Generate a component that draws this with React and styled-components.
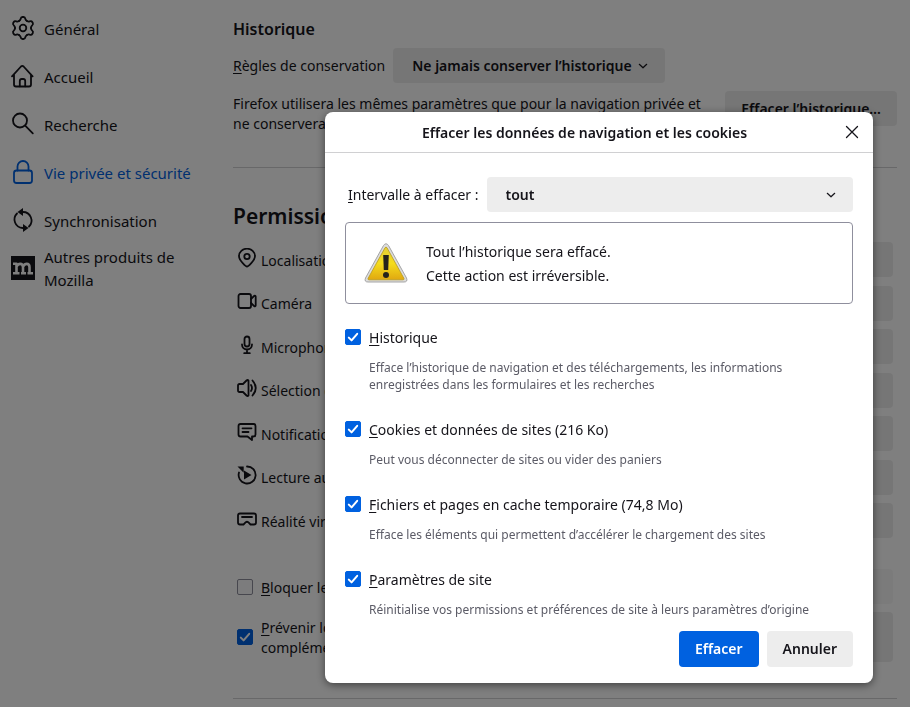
import React from "react";
import styled, { createGlobalStyle } from "styled-components";

const GlobalStyle = createGlobalStyle`
  * {
    box-sizing: border-box;
  }
  body {
    margin: 0;
    background: #fff;
    color: #15141a;
    font: 14px/20px "Noto Sans", "Open Sans", sans-serif;
  }
  u {
    text-underline-offset: 2px;
  }
`;

const chevron = `url("data:image/svg+xml,%3Csvg xmlns='http://www.w3.org/2000/svg' width='12' height='12' fill='none' stroke='%2315141a' stroke-width='1.2' stroke-linecap='round' stroke-linejoin='round'%3E%3Cpath d='M2.3 4.3 6 7.8l3.7-3.5'/%3E%3C/svg%3E")`;
const tick = `url("data:image/svg+xml,%3Csvg xmlns='http://www.w3.org/2000/svg' width='16' height='16' fill='none' stroke='white' stroke-width='2' stroke-linecap='round' stroke-linejoin='round'%3E%3Cpath d='M3.8 8.6l2.8 2.8 5.6-6.6'/%3E%3C/svg%3E")`;

const Page = styled.div`
  display: flex;
  height: 100vh;
  overflow: hidden;
`;

const Sidebar = styled.nav`
  flex: 0 0 233px;
  padding: 4px 30px 0 11px;
`;

const NavItem = styled.a`
  display: flex;
  align-items: center;
  gap: 9px;
  height: 48px;
  font-size: 15px;
  line-height: 23px;
  color: ${props => (props.$active ? "#0061e0" : "inherit")};
  text-decoration: none;

  svg {
    flex: none;
  }
  span {
    padding-top: 2px;
  }
`;

const Main = styled.main`
  flex: 1;
  min-width: 0;
  padding: 19px 13px 0 0;
`;

const SubTitle = styled.h2`
  margin: 0 0 9px;
  font-size: 16px;
  line-height: 20px;
  font-weight: 600;
`;

const Title = styled.h1`
  margin: 0 0 8px;
  font-size: 21px;
  line-height: 28px;
  font-weight: 600;
`;

const Field = styled.div`
  display: flex;
  align-items: center;
  gap: 8px;
`;

const Select = styled.select`
  appearance: none;
  flex: ${props => (props.$grow ? 1 : "none")};
  height: 35px;
  padding: 0 33px 0 19px;
  border: 0;
  border-radius: 4px;
  background: #ededed ${chevron} no-repeat right 16px center;
  color: inherit;
  font: inherit;
  font-weight: 600;
`;

const Button = styled.button`
  min-width: ${props => (props.$wide ? "175px" : "0")};
  min-height: ${props => (props.$tall ? "50px" : "35px")};
  padding: 0 16px;
  border: 0;
  border-radius: 4px;
  background: ${props => (props.$primary ? "#0061e0" : "#ededed")};
  color: ${props => (props.$primary ? "#fff" : "#15141a")};
  font: inherit;
  font-weight: 600;
  white-space: nowrap;

  &:disabled {
    opacity: 0.4;
  }
`;

const HistoryNote = styled.div`
  display: flex;
  justify-content: space-between;
  align-items: flex-start;
  gap: 16px;
  margin-top: 8px;

  p {
    flex: 1;
    max-width: 476px;
    margin: 3px 0 0;
  }
`;

const Divider = styled.hr`
  margin: ${props => props.$top}px 0 0;
  border: 0;
  border-top: 1px solid #d0d0d2;
`;

const Permissions = styled.section`
  margin-top: 34px;
`;

const Rows = styled.ul`
  margin: 0;
  padding: 0 4px;
  list-style: none;
`;

const Row = styled.li`
  display: flex;
  align-items: center;
  gap: 4px;
  height: 43px;

  &:nth-child(even) {
    height: 44px;
  }
  > svg {
    flex: none;
    margin-bottom: 4px;
  }
  span {
    flex: 1;
    padding-top: 2px;
  }
`;

const CheckRows = styled.div`
  padding: 0 4px;
  margin-top: 23px;
`;

const CheckRow = styled.div`
  display: flex;
  align-items: center;
  gap: 8px;
  height: ${props => (props.$tall ? "57px" : "43px")};

  label {
    flex: 1;
    padding-top: 2px;
  }
`;

const Checkbox = styled.input.attrs({ type: "checkbox" })`
  appearance: none;
  flex: none;
  width: 16px;
  height: 16px;
  margin: 0;
  border: 1px solid #8f8f9d;
  border-radius: 2px;
  background: #f9f9fb;

  &:checked {
    border-color: #0061e0;
    background: #0061e0 ${tick} center no-repeat;
  }
`;

const Overlay = styled.div`
  position: fixed;
  inset: 0;
  display: flex;
  justify-content: flex-end;
  align-items: flex-start;
  padding: 112px 37px 24px;
  background: rgba(0, 0, 0, 0.5);
`;

const Dialog = styled.div`
  width: 100%;
  max-width: 548px;
  border-radius: 8px;
  background: #fff;
  box-shadow: 0 2px 8px rgba(0, 0, 0, 0.5);
`;

const DialogHeader = styled.header`
  display: flex;
  align-items: center;
  height: 41px;
  padding-right: 13px;
  border-bottom: 1px solid #d0d0d2;

  h2 {
    flex: 1;
    margin: 0;
    padding-top: 2px;
    font-size: 14px;
    font-weight: 600;
    text-align: center;
  }
`;

const CloseButton = styled.button`
  display: flex;
  padding: 0;
  border: 0;
  background: none;
`;

const DialogBody = styled.form`
  padding: 24px 20px 16px;

  ${Field} {
    padding-left: 3px;
  }
`;

const Warning = styled.div`
  display: flex;
  align-items: center;
  gap: 18px;
  margin: 10px 0 22px;
  padding: 17px 18px 15px;
  border: 1px solid #8f8f9d;
  border-radius: 4px;
  line-height: 24px;

  p {
    margin: 0;
  }
`;

const Option = styled.div`
  display: grid;
  grid-template-columns: 16px 1fr;
  align-items: center;
  gap: 11px 8px;
  margin-bottom: 25px;

  &:last-of-type {
    margin-bottom: 13px;
  }
  label {
    padding-top: 2px;
  }
  p {
    grid-column: 2;
    max-width: 470px;
    margin: 0;
    color: #5b5b66;
    font-size: 12px;
    line-height: 17px;
  }
`;

const Actions = styled.footer`
  display: flex;
  justify-content: flex-end;
  gap: 8px;

  ${Button} {
    min-height: 36px;
  }
`;

const Icon = ({ size = 20, children }) => (
  <svg
    width={size}
    height={size}
    viewBox={`0 0 ${size} ${size}`}
    fill="none"
    stroke="currentColor"
    strokeWidth="1.8"
    strokeLinecap="round"
    strokeLinejoin="round"
    aria-hidden="true"
  >
    {children}
  </svg>
);

const nav = [
  {
    label: "Général",
    icon: (
      <>
        {[0, 60, 120, 180, 240, 300].map(angle => (
          <path
            key={angle}
            transform={`rotate(${angle} 12 12)`}
            d="M8 5.1C9 4.5 9.4 4 9.6 3Q10 1 11.4 1h1.200Q14 1 14.400 3C14.600 4 15 4.500 16 5.100"
          />
        ))}
        <circle cx="12" cy="12" r="3.3" />
      </>
    )
  },
  {
    label: "Accueil",
    icon: (
      <>
        <path d="M1 12.3 10 2.5q1.3-1.3 2.6 0l9 9.8M3 10.500v10q0 2 2 2h13q2 0 2-2v-10" />
        <path d="M8.8 22.3V17q0-2 2-2h1.400q2 0 2 2v5.300" />
      </>
    )
  },
  {
    label: "Recherche",
    icon: (
      <>
        <circle cx="9" cy="8.5" r="7" />
        <path d="m14.2 13.7 7.6 7.6" />
      </>
    )
  },
  {
    label: "Vie privée et sécurité",
    active: true,
    icon: (
      <>
        <rect x="3" y="10.5" width="18" height="12.5" rx="2.5" />
        <path d="M6.500 10.500v-4a5.500 5.500 0 0 1 11 0v4" />
      </>
    )
  },
  {
    label: "Synchronisation",
    icon: (
      <>
        <path d="M6 5.500A8.500 8.500 0 0 0 11.500 20M12 4a8.500 8.500 0 0 1 6 14.500" />
        <path
          d="M12 0v8L6.500 4zM12 16v8l5.500-4z"
          fill="currentColor"
          stroke="none"
        />
      </>
    )
  },
  {
    label: "Autres produits de Mozilla",
    icon: (
      <>
        <path d="M0 0h24v24H0z" fill="currentColor" stroke="none" />
        <path
          d="M2 7.8h3.500v9.700M2 17.200h6.500M5.500 10.500Q7 7.900 9.200 7.900q2.800 0 2.800 3.300v6M10 17.200h5M12 10.500q1.500-2.600 3.700-2.600 2.800 0 2.800 3.300v6M16.500 17.200H22"
          stroke="#fff"
          strokeWidth="2.6"
          strokeLinecap="butt"
        />
      </>
    )
  }
];

const permissions = [
  {
    label: "Localisation",
    icon: (
      <>
        <path d="M10 18.500c-.7 0-8-5.700-8-10.500a8 7.300 0 0 1 16 0c0 4.800-7.300 10.500-8 10.500z" />
        <circle cx="10" cy="8.5" r="2.7" />
      </>
    )
  },
  {
    label: "Caméra",
    icon: (
      <>
        <rect x="1.5" y="3" width="12.5" height="14" rx="2" />
        <path d="m14 8 3.200-3.200q1.300-.6 1.500.8v8.800q-.2 1.400-1.500.8L14 12" />
      </>
    )
  },
  {
    label: "Microphone",
    icon: (
      <>
        <rect x="7.5" y="1.5" width="5" height="10" rx="2.5" />
        <path d="M5 9.500a5 5 0 0 0 10 0M10 14.500v3.500M7.200 18.200h5.600" />
      </>
    )
  },
  {
    label: "Sélection du haut-parleur",
    icon: (
      <>
        <path d="M11.500 2.500v15q-.8 1-2 0L6 14H2.500Q1 14 1 12.500v-5Q1 6 2.500 6H6l3.500-3.500q1.200-1 2 0z" />
        <path d="M14 7q2 3 0 6M15.500 2.500q6.500 7.500 0 15" />
      </>
    )
  },
  {
    label: "Notifications",
    icon: (
      <>
        <path d="M3.500 2h13Q18.500 2 18.500 4v8.500q0 2-2 2H15V18l-4.500-3.500h-7q-2 0-2-2V4q0-2 2-2z" />
        <path d="M5.500 6.300h9M5.500 10h6" />
      </>
    )
  },
  {
    label: "Lecture automatique",
    icon: (
      <>
        <path d="M10 1.500a8.500 8.500 0 1 1-8 6" />
        <path
          d="M.5 1.500h6.200v6.200zM7 5.500v9l7.500-4.500z"
          fill="currentColor"
          stroke="none"
        />
      </>
    )
  },
  {
    label: "Réalité virtuelle",
    icon: (
      <>
        <path d="M3 4.500h14q2 0 2 2v7q0 2-2 2h-3.500l-2.300-2.300q-1.200-1-2.400 0L6.500 15.500H3q-2 0-2-2v-7q0-2 2-2z" />
        <path d="M5 8h10" />
      </>
    )
  }
];

const options = [
  {
    id: "history",
    label: "Historique",
    text:
      "Efface l’historique de navigation et des téléchargements, les informations enregistrées dans les formulaires et les recherches"
  },
  {
    id: "cookies",
    label: "Cookies et données de sites (216 Ko)",
    text: "Peut vous déconnecter de sites ou vider des paniers"
  },
  {
    id: "cache",
    label: "Fichiers et pages en cache temporaire (74,8 Mo)",
    text:
      "Efface les éléments qui permettent d’accélérer le chargement des sites"
  },
  {
    id: "site-settings",
    label: "Paramètres de site",
    text:
      "Réinitialise vos permissions et préférences de site à leurs paramètres d’origine"
  }
];

// First letter underlined as the access key
const AccessLabel = ({ htmlFor, text }) => (
  <label htmlFor={htmlFor}>
    <u>{text[0]}</u>
    {text.slice(1)}
  </label>
);

const WarningIcon = () => (
  <svg width="44" height="42" viewBox="0 0 44 42" aria-hidden="true">
    <defs>
      <linearGradient id="warn" x1="0" y1="0" x2="0" y2="1">
        <stop offset="0" stopColor="#e3cf38" />
        <stop offset="0.5" stopColor="#f5dc1c" />
        <stop offset="1" stopColor="#e0a810" />
      </linearGradient>
    </defs>
    <path
      d="M19.500 2.500q2.500-3.500 5 0L42.500 35q1.500 4-2.500 4H4Q0 39 1.500 35z"
      fill="#dcdcdc"
      stroke="#a5a5a5"
    />
    <path
      d="M21 4.800q1-1.500 2 0L40 35.500q.4 1.300-1 1.300H5q-1.400 0-1-1.300z"
      fill="url(#warn)"
      stroke="#b89a20"
      strokeWidth="0.8"
    />
    <path d="M19.200 12h5.600l-.6 15h-4.400z" fill="#25231c" />
    <circle cx="22" cy="32" r="3" fill="#25231c" />
  </svg>
);

const ClearDialog = () => (
  <Overlay>
    <Dialog role="dialog" aria-modal="true" aria-labelledby="dialog-title">
      <DialogHeader>
        <h2 id="dialog-title">
          Effacer les données de navigation et les cookies
        </h2>
        <CloseButton aria-label="Fermer">
          <svg width="16" height="16" stroke="#15141a" strokeWidth="1.3">
            <path d="m2.500 2.500 11 11M13.500 2.500l-11 11" strokeLinecap="round" />
          </svg>
        </CloseButton>
      </DialogHeader>
      <DialogBody onSubmit={e => e.preventDefault()}>
        <Field>
          <AccessLabel htmlFor="range" text="Intervalle à effacer :" />
          <Select id="range" $grow>
            <option>tout</option>
          </Select>
        </Field>
        <Warning>
          <WarningIcon />
          <div>
            <p>Tout l’historique sera effacé.</p>
            <p>Cette action est irréversible.</p>
          </div>
        </Warning>
        {options.map(item => (
          <Option key={item.id}>
            <Checkbox id={item.id} defaultChecked />
            <AccessLabel htmlFor={item.id} text={item.label} />
            <p>{item.text}</p>
          </Option>
        ))}
        <Actions>
          <Button type="submit" $primary>
            Effacer
          </Button>
          <Button type="button">Annuler</Button>
        </Actions>
      </DialogBody>
    </Dialog>
  </Overlay>
);

const App = () => (
  <>
    <GlobalStyle />
    <Page>
      <Sidebar>
        {nav.map(item => (
          <NavItem key={item.label} href="#" $active={item.active}>
            <Icon size={24}>{item.icon}</Icon>
            <span>{item.label}</span>
          </NavItem>
        ))}
      </Sidebar>
      <Main>
        <SubTitle>Historique</SubTitle>
        <Field>
          <AccessLabel htmlFor="retention" text="Règles de conservation" />
          <Select id="retention">
            <option>Ne jamais conserver l’historique</option>
          </Select>
        </Field>
        <HistoryNote>
          <p>
            Firefox utilisera les mêmes paramètres que pour la navigation privée
            et ne conservera aucun historique.
          </p>
          <Button>Effacer l’historique…</Button>
        </HistoryNote>
        <Divider $top={33} />
        <Permissions>
          <Title>Permissions</Title>
          <Rows>
            {permissions.map(item => (
              <Row key={item.label}>
                <Icon>{item.icon}</Icon>
                <span>{item.label}</span>
                <Button $wide>Paramètres…</Button>
              </Row>
            ))}
          </Rows>
          <CheckRows>
            <CheckRow>
              <Checkbox id="popups" />
              <AccessLabel htmlFor="popups" text="Bloquer les fenêtres popup" />
              <Button $wide disabled>
                Exceptions…
              </Button>
            </CheckRow>
            <CheckRow $tall>
              <Checkbox id="addons" defaultChecked />
              <label htmlFor="addons">
                <u>P</u>révenir lorsque les sites installent des modules
                <br />
                complémentaires
              </label>
              <Button $wide $tall>
                Exceptions…
              </Button>
            </CheckRow>
          </CheckRows>
        </Permissions>
        <Divider $top={33} />
      </Main>
    </Page>
    <ClearDialog />
  </>
);

export default App;
